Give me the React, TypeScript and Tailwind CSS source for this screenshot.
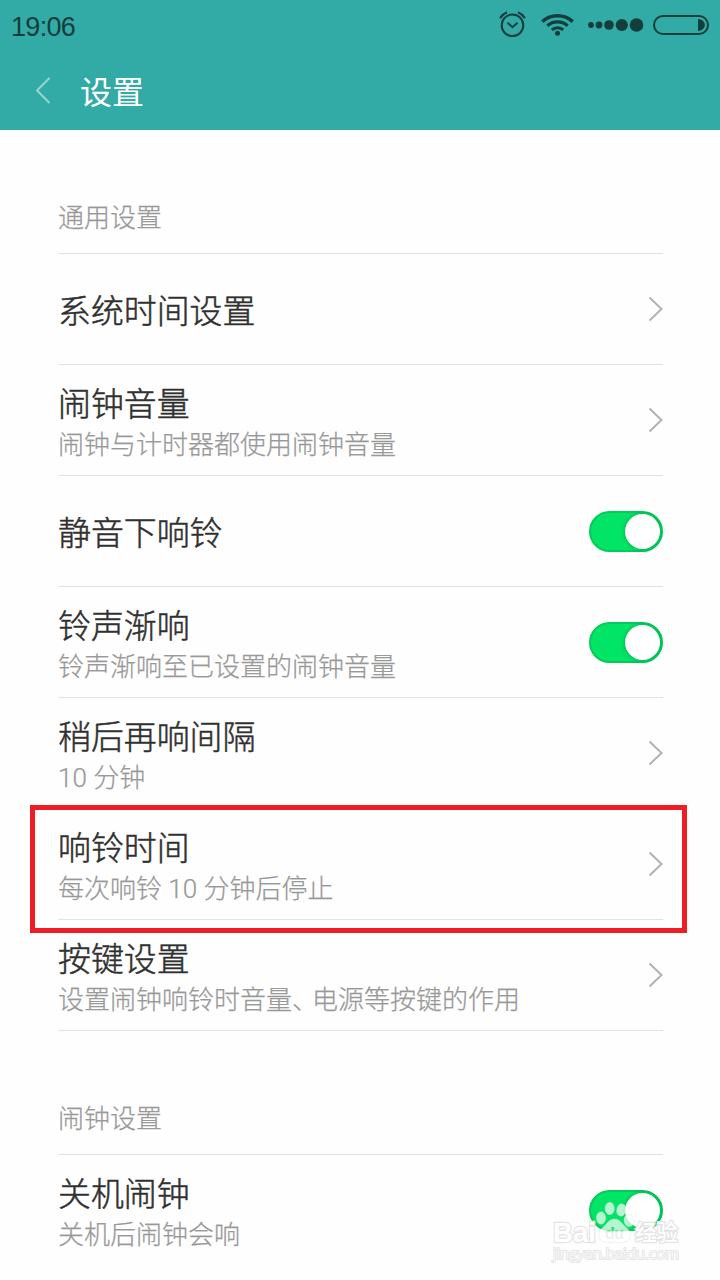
import { useState } from "react";

type Item = {
  title: string;
  desc?: string;
  type: "link" | "switch";
  highlight?: boolean;
};

type Group = {
  label: string;
  items: Item[];
};

const groups: Group[] = [
  {
    label: "通用设置",
    items: [
      { title: "系统时间设置", type: "link" },
      { title: "闹钟音量", desc: "闹钟与计时器都使用闹钟音量", type: "link" },
      { title: "静音下响铃", type: "switch" },
      { title: "铃声渐响", desc: "铃声渐响至已设置的闹钟音量", type: "switch" },
      { title: "稍后再响间隔", desc: "10 分钟", type: "link" },
      { title: "响铃时间", desc: "每次响铃 10 分钟后停止", type: "link", highlight: true },
      { title: "按键设置", desc: "设置闹钟响铃时音量、电源等按键的作用", type: "link" },
    ],
  },
  {
    label: "闹钟设置",
    items: [{ title: "关机闹钟", desc: "关机后闹钟会响", type: "switch" }],
  },
];

const StatusIcons = () => (
  <svg width="220" height="50" viewBox="500 0 220 50" fill="none" stroke="#143e3c" className="overflow-visible">
    {/* alarm */}
    <circle cx="512.5" cy="25.3" r="10.8" strokeWidth="2" />
    <path d="M507.5 22.8l5 4.4 5-4.4" strokeWidth="2" />
    <path d="M500 18.2q2.4-4 7-5.9M525 18.2q-2.4-4-7-5.9" strokeWidth="2.2" />
    {/* wifi */}
    <path d="M542.3 21.6a22.5 22.5 0 0 1 30.4 0" strokeWidth="3.6" />
    <path d="M547.3 25.8a15.3 15.3 0 0 1 20.4 0" strokeWidth="3.2" />
    <path d="M551.8 29.8a8.6 8.6 0 0 1 11.4 0" strokeWidth="3" />
    <circle cx="557.5" cy="33.3" r="2.5" fill="#143e3c" stroke="none" />
    {/* signal */}
    <g fill="#143e3c" stroke="none">
      <circle cx="591" cy="25" r="2.9" />
      <circle cx="599" cy="25" r="3.4" />
      <circle cx="609" cy="25" r="4.8" />
      <circle cx="621.8" cy="25" r="6.1" />
      <circle cx="636.5" cy="25" r="6.8" />
    </g>
    {/* battery */}
    <rect x="654" y="16" width="54" height="18" rx="9" strokeWidth="2" />
    <path d="M698 19a6.9 6 0 0 1 0 12z" fill="#143e3c" stroke="none" />
  </svg>
);

const Header = () => (
  <header className="h-[130px] bg-[#32aaa6]">
    <div className="flex h-[50px] items-center justify-between">
      <span className="pt-1 pl-[11px] font-['Liberation_Sans',sans-serif] text-[27px] font-normal tracking-[-0.7px] text-[#143e3c]">
        19:06
      </span>
      <StatusIcons />
    </div>
    <div className="flex h-20 items-center pl-[34px]">
      <svg width="18" height="28" viewBox="0 0 18 28" fill="none" stroke="#99d5d2" strokeWidth="2">
        <path d="M15.5 2L3 14.5 15.5 27" />
      </svg>
      <h1 className="pt-1.5 pl-[28px] text-[32px] leading-10 font-normal text-white">设置</h1>
    </div>
  </header>
);

const Chevron = () => (
  <svg width="16" height="26" viewBox="0 0 16 26" fill="none" stroke="#b2b2b2" strokeWidth="2">
    <path d="M2.5 1.5L14.5 13 2.5 24.5" />
  </svg>
);

const Switch = () => {
  const [on, setOn] = useState(true);

  return (
    <button
      role="switch"
      aria-checked={on}
      onClick={() => setOn(!on)}
      className={`mt-px flex h-[41px] w-[74px] items-center rounded-full border-2 px-px ${
        on ? "justify-end border-[#04cb5c] bg-[#02e465]" : "justify-start border-gray-300 bg-gray-200"
      }`}
    >
      <span className="size-[35px] rounded-full bg-white shadow-[0_0_4px_rgba(0,90,40,0.45)]" />
    </button>
  );
};

const Row = ({ item, last }: { item: Item; last: boolean }) => (
  <div
    className={`relative flex h-[111px] items-center justify-between border-b ${
      last ? "border-transparent" : "border-[#e2e2e2]"
    }`}
  >
    <div className={item.desc ? "pt-2.5" : "pt-[5px]"}>
      <p className="text-[32.9px] leading-[41px] text-[#303030] [-webkit-text-stroke:0.5px_#303030]">{item.title}</p>
      {item.desc && (
        <p className="text-[26px] leading-[41px] text-[#999] [-webkit-text-stroke:0.25px_#999]">
          {item.desc.split("、").map((part, i) => (
            <span key={part}>
              {i > 0 && <span className="tracking-[-6px]">、</span>}
              {part}
            </span>
          ))}
        </p>
      )}
    </div>
    {item.type === "link" ? <Chevron /> : <Switch />}
    {item.highlight && (
      <div className="pointer-events-none absolute -top-1 -left-7 h-32 w-[657px] border-5 border-[#ee1c25]" />
    )}
  </div>
);

const Watermark = () => (
  <svg
    className="pointer-events-none absolute top-[1195px] left-[545px]"
    width="145"
    height="75"
    viewBox="545 1195 145 75"
  >
    <defs>
      {/* the letters are cut out of the paw, so they pick up the switch above its lower edge */}
      <linearGradient id="cut" gradientUnits="userSpaceOnUse" x1="0" y1="1230" x2="0" y2="1232">
        <stop offset="0" stopColor="#1fdc70" />
        <stop offset="1" stopColor="#efefef" />
      </linearGradient>
    </defs>
    <g
      fill="#fff"
      stroke="#e4e4e4"
      strokeWidth="2.4"
      paintOrder="stroke"
      fontWeight="700"
      fontFamily="'Liberation Sans','Noto Sans CJK SC',sans-serif"
    >
      <text x="553" y="1242" fontSize="28" textLength="43" lengthAdjust="spacingAndGlyphs">Bai</text>
      <text x="635" y="1240" fontSize="22" fontWeight="500" textLength="43" lengthAdjust="spacingAndGlyphs">经验</text>
    </g>
    <g fill="#fff" fillOpacity="0.7" stroke="#dedede" strokeOpacity="0.4" strokeWidth="1">
      <ellipse cx="601" cy="1218" rx="4.6" ry="6.2" />
      <ellipse cx="609.7" cy="1208.5" rx="4.6" ry="6.2" />
      <ellipse cx="621.3" cy="1210" rx="4.6" ry="6.2" transform="rotate(10 621.3 1210)" />
      <ellipse cx="629" cy="1220.5" rx="5" ry="6.2" transform="rotate(-10 629 1220.5)" />
      <path d="M614.5 1219c5 0 7 4 11 8 4 3 6 7 4 11-2 5-7 5-15 4-8 1-13 1-15-4-2-4 0-8 4-11 4-4 6-8 11-8z" />
    </g>
    <text
      x="605"
      y="1239"
      fontSize="16"
      fontWeight="700"
      fontFamily="'Liberation Sans',sans-serif"
      fill="url(#cut)"
      textLength="19"
    >
      du
    </text>
    <text
      x="553"
      y="1259"
      fontSize="14.5"
      textLength="126"
      lengthAdjust="spacingAndGlyphs"
      fontFamily="'Open Sans',sans-serif"
      fill="#fff"
      stroke="#e4e4e4"
      strokeWidth="1.8"
      paintOrder="stroke"
    >
      jingyan.baidu.com
    </text>
  </svg>
);

const App = () => {
  return (
    <div className="relative h-[1280px] w-[720px] overflow-hidden bg-[#fefefe] font-[Roboto,'Noto_Sans_CJK_SC',sans-serif] font-light">
      <Header />
      <main className="pr-[57px] pl-[58px]">
        {groups.map((group, index) => (
          <section key={group.label}>
            <h2 className="flex h-[124px] items-end border-b border-[#e2e2e2] pb-4 text-[26px] leading-[38px] text-[#999] [-webkit-text-stroke:0.25px_#999]">
              {group.label}
            </h2>
            {group.items.map((item) => (
              <Row key={item.title} item={item} last={index === groups.length - 1} />
            ))}
          </section>
        ))}
      </main>
      <Watermark />
    </div>
  );
};

export default App;
